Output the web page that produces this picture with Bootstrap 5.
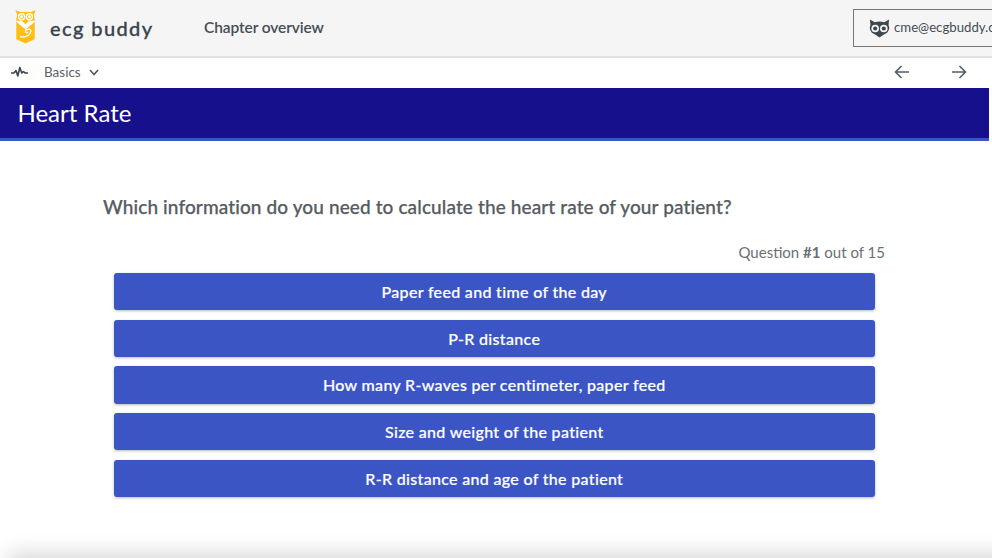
<!DOCTYPE html>
<html lang="en">
<head>
<meta charset="utf-8">
<link href="https://cdn.jsdelivr.net/npm/bootstrap@5.3.0/dist/css/bootstrap.min.css" rel="stylesheet">
<style>
html,body{height:100%;overflow:hidden}
body{font-family:"Lato","Noto Sans",sans-serif;color:#4d5358;background:#fff}
.app-shell{height:558px;width:992px;overflow:hidden;position:relative}
.top-head{height:58px;background:#f5f5f5;border-bottom:2px solid #e2e2e2}
.logo-box{width:50px;padding-left:15px;margin-top:-3px}
.brand-word{font-size:20px;font-weight:500;letter-spacing:1.4px;-webkit-text-stroke:.3px #3b444b;color:#3b444b;width:154px}
.chapter-link{font-size:15.5px;font-weight:600;color:#454d53;letter-spacing:-.1px}
.user-box{width:160px;height:38px;margin-left:auto;margin-right:-21px;border:1px solid #777;padding-left:15px;font-size:13.2px;color:#454d53;white-space:nowrap;overflow:hidden}
.sub-bar{height:30px;padding-left:11px;padding-bottom:2px}
.basics-txt{font-size:13.5px;color:#5b6266;margin-left:16px}
.arrows-wrap{margin-left:auto;gap:41px;padding-right:25px}
.title-band{height:53px;background:#16108c;border-bottom:3px solid #3c55c5;color:#fff;padding-left:17.5px;margin-right:3px;font-size:24px;line-height:50px}
.q-text{font-size:19px;font-weight:500;color:#565c61;margin:54px 0 0 103px;line-height:23px;letter-spacing:.11px;-webkit-text-stroke:.25px #565c61}
.q-count{font-size:15px;color:#6a7075;text-align:right;padding-right:107px;margin-top:25px;line-height:18px}
.answers{margin:12px 117px 0 113.500px;gap:9.500px}
.answer-btn{height:37.2px;background:#3c55c5;border:0;border-radius:3px;color:#fff;font-size:16px;font-weight:500;padding:1px 0 0;letter-spacing:.32px;-webkit-text-stroke:.2px #fff;box-shadow:0 1px 3px rgba(0,0,0,.28)}
.answer-btn:hover{background:#3c55c5;color:#fff}
.bottom-fade{position:absolute;left:12px;right:-40px;top:558px;height:40px;box-shadow:0 0 22px 4px rgba(0,0,0,.17)}
</style>
</head>
<body>
<div class="app-shell">
<header class="top-head d-flex align-items-center">
  <div class="logo-box">
    <svg width="22" height="35" viewBox="0 0 22 36" class="d-block">
      <path d="M0 1 L5 3 H16 L21 1 L19 6 L20 11 V31 L10.500 35.500 L1 31 V11 L2 6Z" fill="#fdbf16"/>
      <circle cx="6.500" cy="8" r="3.800" fill="#fff"/><circle cx="14.500" cy="8" r="3.800" fill="#fff"/>
      <circle cx="6.500" cy="8" r="2" fill="none" stroke="#fdbf16" stroke-width="1"/><circle cx="14.500" cy="8" r="2" fill="none" stroke="#fdbf16" stroke-width="1"/>
      <path d="M1 13 L10.500 21 L20 13 V12 L14 12 L10.500 16 L7 12 H1Z" fill="#fff"/>
      <path d="M5 28 C7 30 15 28 16 23 C16.500 20 11 20 10.500 23 C10.500 25 13 25 13 23.500" fill="none" stroke="#fff" stroke-width="1.200"/>
    </svg>
  </div>
  <div class="brand-word">ecg buddy</div>
  <div class="chapter-link">Chapter overview</div>
  <div class="user-box d-flex align-items-center">
    <svg width="21" height="20" viewBox="0 0 22 20" class="flex-shrink-0 me-1">
      <path d="M1 1 L6 4 Q11 2.500 16 4 L21 1 L20.500 7 Q22.500 11 19 15 Q15 17 11 20 Q7 17 3 15 Q-.5 11 1.500 7Z" fill="#3f474d"/>
      <circle cx="6.500" cy="10.500" r="4" fill="#f5f5f5"/><circle cx="15.500" cy="10.500" r="4" fill="#f5f5f5"/>
      <circle cx="6.500" cy="10.500" r="2.200" fill="#3f474d"/><circle cx="15.500" cy="10.500" r="2.200" fill="#3f474d"/>
    </svg>
    <span>cme@ecgbuddy.com</span>
  </div>
</header>
<nav class="sub-bar d-flex align-items-center">
  <svg width="17" height="12" viewBox="0 0 17 12"><path d="M0 7 H3 L5 4.500 L6.800 10 L8.800 1.500 L10.800 7 L12.500 5.500 L14 7 H17" fill="none" stroke="#3b444b" stroke-width="1.600" stroke-linejoin="round"/></svg>
  <span class="basics-txt">Basics</span>
  <svg class="ms-2" width="10" height="7" viewBox="0 0 10 7"><path d="M1 1 L5 5.500 L9 1" fill="none" stroke="#4d5358" stroke-width="1.500"/></svg>
  <div class="arrows-wrap d-flex align-items-center">
    <svg width="16" height="14" viewBox="0 0 16 14"><path d="M15 7 H1.500 M7.500 1 L1.500 7 L7.500 13" fill="none" stroke="#555c61" stroke-width="1.600"/></svg>
    <svg width="16" height="14" viewBox="0 0 16 14"><path d="M1 7 H14.500 M8.500 1 L14.500 7 L8.500 13" fill="none" stroke="#555c61" stroke-width="1.600"/></svg>
  </div>
</nav>
<div class="title-band">Heart Rate</div>
<p class="q-text mb-0">Which information do you need to calculate the heart rate of your patient?</p>
<div class="q-count">Question <b>#1</b> out of 15</div>
<div class="answers d-flex flex-column">
  <button class="btn answer-btn">Paper feed and time of the day</button>
  <button class="btn answer-btn">P-R distance</button>
  <button class="btn answer-btn">How many R-waves per centimeter, paper feed</button>
  <button class="btn answer-btn">Size and weight of the patient</button>
  <button class="btn answer-btn">R-R distance and age of the patient</button>
</div>
<div class="bottom-fade"></div>
</div>
<script src="https://cdn.jsdelivr.net/npm/bootstrap@5.3.0/dist/js/bootstrap.bundle.min.js"></script>
</body>
</html>
